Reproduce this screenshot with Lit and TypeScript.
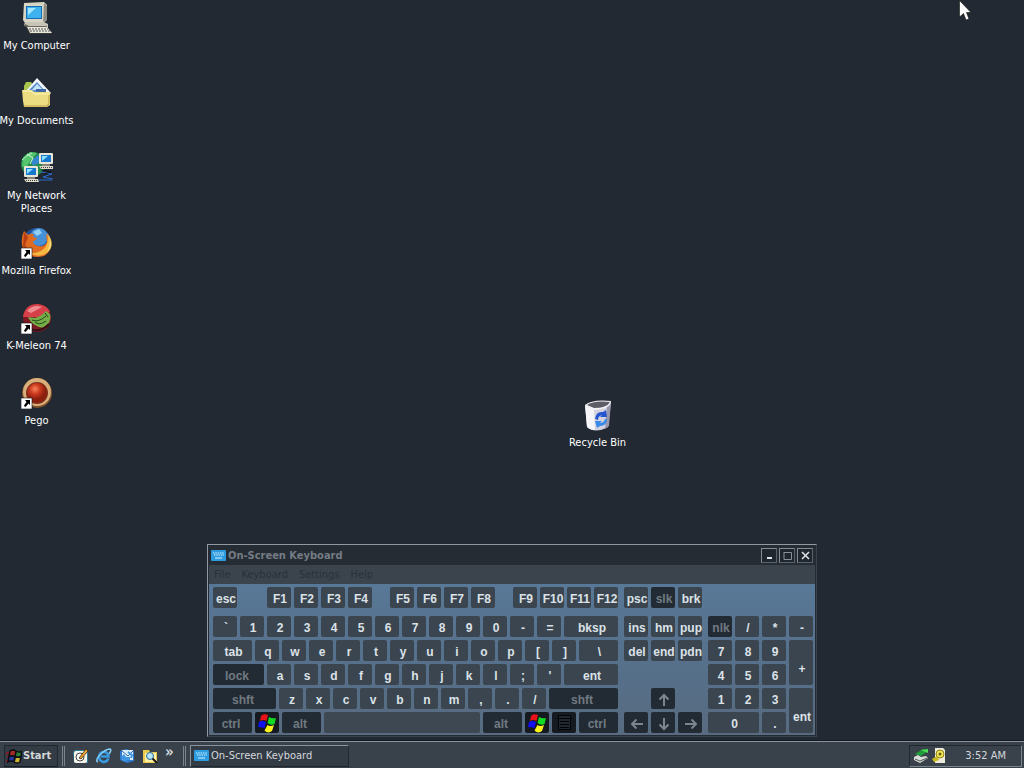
import { LitElement, html, css, svg, nothing } from "lit";
import { customElement } from "lit/decorators.js";

type Cap = [label: string, width: number, kind?: string];

const U = 24;
const row = (labels: string): Cap[] => labels.split(" ").map((l): Cap => [l, U]);
const gap = (width: number): Cap => ["", width, "gap"];

const MAIN: Cap[][] = [
  [["esc", U], gap(24), ...row("F1 F2 F3 F4"), gap(12), ...row("F5 F6 F7 F8"), gap(12), ...row("F9 F10 F11 F12")],
  [...row("\` 1 2 3 4 5 6 7 8 9 0 - ="), ["bksp", 54]],
  [["tab", 39], ...row("q w e r t y u i o p [ ]"), ["\\", 39]],
  [["lock", 51, "mod"], ...row("a s d f g h j k l ; '"), ["ent", 54]],
  [["shft", 63, "mod"], ...row("z x c v b n m , . /"), ["shft", 69, "mod"]],
  [["ctrl", 39, "mod"], ["Windows", U, "win"], ["alt", 39, "mod"], ["Space", 156, "space"], ["alt", 39, "mod"],
    ["Windows", U, "win"], ["Menu", U, "menu"], ["ctrl", 39, "mod"]],
];

const NAV: Cap[][] = [
  [["psc", U], ["slk", U, "lock"], ["brk", U]],
  row("ins hm pup"),
  row("del end pdn"),
  [],
  [gap(24), ["Up", U, "up"]],
  [["Left", U, "left"], ["Down", U, "down"], ["Right", U, "right"]],
];

const PAD: [string, string][] = [
  ["nlk", "lock"], ["/", ""], ["*", ""], ["-", ""],
  ["7", ""], ["8", ""], ["9", ""], ["+", "tall"],
  ["4", ""], ["5", ""], ["6", ""],
  ["1", ""], ["2", ""], ["3", ""], ["ent", "tall"],
  ["0", "wide"], [".", ""],
];

const box = (size: number, body: unknown, view = size) =>
  html`<svg width=${size} height=${size} viewBox="0 0 ${view} ${view}" aria-hidden="true">${body}</svg>`;

const shortcut = svg`<rect x="0" y="21" width="11" height="11" fill="#fff" stroke="#111" stroke-width=".6"/>
  <path d="M4 23h5v5L7.500 26.500 5 29.500 4 30 3 28.500 5.500 25Z" fill="#000"/>`;

const monitor = svg`<path d="M3 1 23 0 26 3V18L22 21H4L2 18Z" fill="#d8d5c4"/><path d="M23 1 26 4V18L22 20Z" fill="#8e8b80"/>
  <path d="M5 4H21V17H5Z" fill="#176db5"/><path d="M6 5H20V16H6Z" fill="#3db2ef"/><path d="M7 6H15L7 13Z" fill="#a4e6ff"/>
  <path d="M4 20H23L27 22V27L8 26 3 23Z" fill="#c9c5b6"/><path d="M4 22 8 24H26V26H8L3 24Z" fill="#69675f"/>
  <path d="M6 25 26 25 31 31 9 31Z" fill="#e8e5da"/><path d="M8 27H27M9 29H29" stroke="#555" stroke-width="1" stroke-dasharray="2 1"/>
  <path d="M6 26 9 32H31" stroke="#4b4942" fill="none"/>`;

const miniPc = svg`<rect x="0" y="0" width="14" height="11" rx="1" fill="#e7e5d8"/><rect x="2" y="2" width="10" height="7" fill="#1778cd"/>
  <path d="M3 3H9L3 8Z" fill="#8ee2ff"/><path d="M3 11H11V13H3Z" fill="#87857c"/><path d="M0 13H14L15 16H2Z" fill="#dddacb"/>
  <path d="M2 14.500H13" stroke="#444" stroke-dasharray="1 1"/>`;

const icons = {
  computer: box(32, monitor),
  documents: box(32, svg`<path d="M3 9 5 5H10L12 8H19V15H3Z" fill="#a9c64e"/><path d="M5 14 16 1 30 16 22 25Z" fill="#f3f6fa"/>
    <path d="M8 13 16 5 26 16 18 19Z" fill="#5b8fcc"/><path d="M11 13 16 7 22 13Z" fill="#c5e3f7"/><path d="M15 12H25V17H15Z" fill="#3d6aa4"/>
    <path d="M1 13H11L13 15H29V28L26 30H3L2 24Z" fill="#ecdc82"/><path d="M2 14H10L13 17H28" stroke="#fff6b8" fill="none"/>
    <path d="M3 29H25L28 27V18" stroke="#b89d3e" fill="none"/>`),
  network: box(32, svg`<circle cx="12" cy="12" r="12" fill="#238c4b"/><path d="M2 6 9 0 16 1 10 8 6 14 1 15Z" fill="#55c46d"/>
    <path d="M10 9 17 3 20 10 12 14Z" fill="#3288cf"/><path d="M1 8Q6 3 11 1" stroke="#bdf1cc" fill="none"/><path d="M6 2 12 6 9 12" stroke="#d5f5e0" fill="none"/>
    <g transform="translate(18 1)">${miniPc}</g><g transform="translate(3 14)">${miniPc}</g>
    <path d="M20 20 31 22 22 25 32 27M18 28H31" stroke="#286bd0" fill="none"/><path d="M20 18 30 20 23 22" stroke="#111" fill="none"/>`),
  firefox: box(32, svg`<circle cx="16" cy="15" r="14" fill="#23509c"/><circle cx="18" cy="10" r="9" fill="#4590d6"/><path d="M12 5 18 2 21 6 16 9Z" fill="#93cff5"/>
    <path d="M3 4 7 8Q9 6 13 7L12 10 16 11Q15 14 12 14 12 18 17 19 24 20 26 15L25 7 29 11Q33 23 23 29 9 33 2 22 -1 12 3 4Z" fill="#df6b20"/>
    <path d="M26 6Q35 17 27 25 19 32 8 26 20 27 25 19 28 13 26 6Z" fill="#f4b840"/><path d="M29 12Q32 20 26 25 29 19 29 12Z" fill="#fbe18a"/><path d="M3 5 7 10 4 18 8 24 2 20Z" fill="#b83e16"/>${shortcut}`),
  kmeleon: box(32, svg`<circle cx="16" cy="16" r="14" fill="#7d1a24"/><path d="M2 15Q4 2 17 2 26 3 29 10L17 15Z" fill="#d64049"/>
    <path d="M6 9Q12 2 21 5L10 11Z" fill="#ee8c90"/><path d="M7 15 14 16Q21 14 25 9L29 12Q31 18 25 25 20 27 14 23 9 20 7 15Z" fill="#75ad48"/>
    <path d="M11 18Q17 21 25 14M14 20Q18 24 25 19M24 11 27 15" stroke="#23461b" fill="none"/>
    <path d="M7 25Q17 33 28 22" stroke="#371015" stroke-width="2" fill="none"/>${shortcut}`),
  pego: box(32, svg`<defs><radialGradient id="pego" cx=".4" cy=".3"><stop stop-color="#f9845b"/><stop offset=".5" stop-color="#cd3a20"/><stop offset="1" stop-color="#8c200e"/></radialGradient></defs>
    <circle cx="16" cy="16" r="15" fill="#805029"/><circle cx="16" cy="15" r="14" fill="#d9b07c"/><circle cx="16" cy="16" r="11" fill="#80301a"/><circle cx="16" cy="16" r="10" fill="url(#pego)"/>${shortcut}`),
  bin: box(32, svg`<path d="M3 6 5 28Q13 35 26 28L29 3Z" fill="#d3d3df"/><path d="M3 6 5 28Q8 31 13 31L12 10Z" fill="#f5f5fa"/><path d="M25 7 29 3 27 27 23 30Z" fill="#9998aa"/>
    <path d="M3 6Q10 0 29 2 29 10 12 11 6 10 3 6Z" fill="#f1f1f5"/><path d="M5 6Q12 1 28 3 25 9 12 9Z" fill="#5d5d66"/>
    <path d="M13 20Q14 12 21 13L24 11 25 18H18L20 16Q16 17 16 21Z" fill="#2456cf"/><path d="M25 20Q25 27 18 27L15 29 13 22 20 22 18 24Q22 24 23 20Z" fill="#3889e8"/>`),
  keyboard: html`<svg width="15" height="11" viewBox="0 0 15 11" aria-hidden="true"><rect width="15" height="11" rx="1" fill="#2d9be0"/>
    <path d="M2 3H13M3 5H13" stroke="#d9f3ff" stroke-dasharray="1.500 .8"/><path d="M4 8H11" stroke="#d9f3ff"/></svg>`,
  flag: box(20, svg`<path d="M4 3Q6 0 11 2L9.500 8Q6 6 3 8Z" fill="#e81218"/><path d="M12 4Q15 6 19 5L17.500 11Q14 13 10.500 10Z" fill="#0fdc20"/>
    <path d="M2 9Q6 7 9 9.500L7.500 15Q4 14 1 14Z" fill="#1010f0"/><path d="M10.500 12Q13 14 17 12L15 18Q11 21 7.500 17.500Z" fill="#fbf41c"/>`),
  start: box(16, svg`<path d="M0 4H3V6H0M1 8H4V10H1M0 12H3V14H0" fill="#8d1720"/><path d="M4 3Q7 1 10 3L9 8Q6 6 3 8Z" fill="#a82a28"/><path d="M11 3Q13 4 16 3L15 8Q12 10 10 8Z" fill="#2b7d34"/>
    <path d="M3 9Q6 8 9 9L8 14Q5 12 2 14Z" fill="#25369c"/><path d="M10 9Q12 11 15 9L14 14Q11 16 9 14Z" fill="#cbb531"/><path d="M4 3Q7 1 10 3 13 5 16 3L14 14Q11 16 8 14 5 12 2 14ZM10 3 8 14M3 8.500Q6 7 9 8.500 12 10 15 8.500" fill="none" stroke="#0a0c0f" stroke-width="1.500"/>`),
  sheet: box(16, svg`<path d="M0 4 2 2H13L15 4V15H1Z" fill="#2d7b9b"/><rect x="1" y="3" width="13" height="12" rx="2" fill="#f5f4e8"/><circle cx="7" cy="9" r="4" fill="#fff" stroke="#444"/>
    <path d="M6 10 13 1 15 3 8 11Z" fill="#e9aa35" stroke="#3c2210" stroke-width=".8"/>`),
  ie: box(16, svg`<path d="M12.500 10.500Q11 14 7.500 14 3 13 3 8.500 4 4 8 4 12 4 12.500 8.500H5" stroke="#389be0" stroke-width="2.500" fill="none"/>
    <path d="M2 14Q-1 13 3 8 9 1 14 1 16 2 13 6" stroke="#80cdf5" fill="none" stroke-width="1.500"/>`),
  mail: box(16, svg`<path d="M1 3 7 1 15 3V13L8 15 1 12Z" fill="#2f79cf"/><path d="M3 2H14V12H3Z" fill="#dcecfb"/><path d="M3 3 9 8 14 3" stroke="#2d69b0" fill="none"/>
    <path d="M5 6 7 9H11V12H7L9 14 4 13 2 9Z" fill="#3f96e4"/><path d="M9 4 13 7 12 10" fill="none" stroke="#3f96e4" stroke-width="2"/>`),
  search: box(16, svg`<path d="M1 2H7L8 4H15V15H1Z" fill="#e9c94d"/><path d="M3 5H14V14H3Z" fill="#fff2a2"/><circle cx="8" cy="8" r="3.500" fill="#b5e6fb" stroke="#27699d"/><path d="M10.500 10.500 15 15" stroke="#161616" stroke-width="2"/>`),
  device: box(16, svg`<path d="M2 6 10 1 15 3 8 8Z" fill="#1f9e38"/><path d="M8 2 15 1V5Z" fill="#4ddd58"/><path d="M1 9 5 7 8 9 13 8 15 10 7 15 1 12Z" fill="#d9ddd9"/><path d="M2 11 7 13 14 10" stroke="#555" fill="none"/>`),
  volume: box(16, svg`<path d="M4 0H12L14 2V15H4Z" fill="#eeeadc"/><circle cx="9" cy="6" r="4" fill="#f3e65a" stroke="#8b8217"/><circle cx="9" cy="6" r="1.500" fill="#676012"/><path d="M1 11 6 8 8 12 3 14Z" fill="#c9b91f"/>`),
};

const ARROWS: Record<string, string> = {
  up: "M7 13V2M2.500 6.500 7 2 11.500 6.500",
  down: "M7 1V12M2.500 7.500 7 12 11.500 7.500",
  left: "M13 7H2M6.500 2.500 2 7 6.500 11.500",
  right: "M1 7H12M7.500 2.500 12 7 7.500 11.500",
};

@customElement("on-screen-keyboard")
class OnScreenKeyboard extends LitElement {
  static styles = css`
    :host { display: block; border: 1px solid; border-color: #9299a1 #39434e #39434e #9299a1; background: #242b34; padding: 1px; color: #b5bac0; }
    .title { display: flex; align-items: center; height: 19px; padding: 0 2px; background: #252c34; gap: 2px; }
    .name { flex: 1; font-weight: bold; color: #747c84; margin: 0; font-size: 11px; }
    .buttons { display: flex; gap: 2px; }
    .box { width: 16px; height: 15px; padding: 0; border: 1px solid #858b91; border-right-color: #59616a; border-bottom-color: #59616a; background: #20262d; display: grid; place-items: center; }
    .menus { display: flex; height: 19px; align-items: center; background: #3b444d; padding-left: 5px; gap: 11px; }
    .menu { border: 0; padding: 0; background: none; font: inherit; color: #29313a; }
    .area { display: flex; gap: 6px; background: linear-gradient(#587897, #566f89 60%, #586b80); padding: 3px 2px 2px 4px; }
    .block { display: flex; flex-direction: column; gap: 3px; }
    .row { display: flex; gap: 3px; height: 21px; }
    .row:first-child { margin-bottom: 5px; }
    .key { height: 21px; box-sizing: border-box; padding: 3px 0 0 2px; border: 0; border-radius: 2px; background: #3a454f; color: #dce2e8; font: bold 12px/18px "Liberation Sans", Arial, sans-serif; white-space: nowrap; display: flex; justify-content: center; align-items: center; }
    .mod, .lock, .up, .down, .left, .right { background: #222b34; color: #717a82; }
    .mod { padding-right: 5px; }
    .win, .menu-key { background: #151a20; padding: 0; }
    .space { background: #3d4852; }
    .pad { display: grid; grid-template-columns: repeat(4, 24px); grid-auto-rows: 21px; gap: 3px; padding-top: 29px; }
    .tall { grid-row: span 2; height: auto; padding-top: 13px; }
    .wide { grid-column: span 2; }
  `;

  private cap([label, width, kind = ""]: Cap) {
    if (kind === "gap") return html`<span style="width:${width}px"></span>`;
    const cls = kind === "menu" ? "menu-key" : kind;
    let face: unknown = label;
    if (kind === "win") face = icons.flag;
    else if (kind === "space") face = nothing;
    else if (kind === "menu")
      face = box(17, svg`<path d="M2 1H15V16H2Z" fill="#20272f"/><path d="M2.500 1.500H14.500V15.500H2.500ZM1 4.500H16M4 7.500H13M4 10.500H13M4 13.500H13" fill="none" stroke="#020304"/>`);
    else if (ARROWS[kind]) face = box(14, svg`<path d=${ARROWS[kind]} fill="none" stroke="#7c858c" stroke-width="2"/>`);
    return html`<button class="key ${cls}" aria-label=${label} style="width:${width}px">${face}</button>`;
  }

  private block(lines: Cap[][]) {
    return html`<div class="block">${lines.map((l) => html`<div class="row">${l.map((c) => this.cap(c))}</div>`)}</div>`;
  }

  render() {
    return html`
      <header class="title">
        ${icons.keyboard}
        <h1 class="name">On-Screen Keyboard</h1>
        <div class="buttons">
          <button class="box" aria-label="Minimize">${box(11, svg`<path d="M3 8H8" stroke="#e2e5e8" stroke-width="2"/>`)}</button>
          <button class="box" aria-label="Maximize">${box(11, svg`<path d="M2 2.500H9.500V9.500H2V2" fill="none" stroke="#8b9299"/>`)}</button>
          <button class="box" aria-label="Close">${box(11, svg`<path d="M2 2 9 9M9 2 2 9" stroke="#e2e5e8" stroke-width="1.500"/>`)}</button>
        </div>
      </header>
      <nav class="menus">
        ${["File", "Keyboard", "Settings", "Help"].map((m) => html`<button class="menu">${m}</button>`)}
      </nav>
      <div class="area">
        ${this.block(MAIN)} ${this.block(NAV)}
        <div class="pad">${PAD.map(([l, k]) => html`<button class="key ${k}">${l}</button>`)}</div>
      </div>
    `;
  }
}

@customElement("app-root")
class AppRoot extends LitElement {
  static styles = css`
    :host { display: flex; flex-direction: column; height: 100vh; overflow: hidden; background: #222932; color: #fff; font: 11px/13px Tahoma, "DejaVu Sans Condensed", "Noto Sans", sans-serif; cursor: default; }
    .desktop { flex: 1; position: relative; }
    .shortcuts { display: flex; flex-direction: column; width: 73px; padding-top: 2px; }
    .item { display: flex; flex-direction: column; align-items: center; gap: 5px; height: 75px; color: #fff; text-decoration: none; text-align: center; }
    .label { white-space: pre; }
    .bin { position: absolute; left: 561px; top: 399px; width: 73px; }
    .osk { position: absolute; left: 207px; top: 544px; }
    .pointer { position: absolute; left: 959px; top: 0; }
    .taskbar { display: flex; align-items: center; height: 25px; border-top: 1px solid #8b939b; box-shadow: 0 -1px #12181f; background: #39424b; padding: 1px 2px 0 4px; color: #d3d7db; }
    .task, .start { display: flex; align-items: center; height: 22px; box-sizing: border-box; background: #333c45; color: inherit; font: inherit; border: 1px solid; }
    .start { width: 54px; padding: 0 1px; gap: 1px; font-weight: bold; border-color: #20272e #20272e #171d23 #20272e; }
    .task { width: 159px; gap: 2px; padding: 0 3px; border-color: #89919a #20272e #20272e #89919a; }
    .grip { width: 1px; height: 20px; border-left: 1px solid #7b838b; border-right: 1px solid #7b838b; margin: 0 4px; }
    .quick { display: flex; gap: 7px; padding-left: 4px; }
    .tool { border: 0; padding: 0; background: none; height: 16px; color: inherit; }
    .more { display: flex; font: bold 15px/8px "DejaVu Sans Condensed", sans-serif; width: 14px; }
    .tray { display: flex; align-items: center; gap: 2px; margin-left: auto; height: 22px; width: 113px; box-sizing: border-box; padding: 0 15px 0 3px; border: 1px solid; border-color: #20272e #7b838b #7b838b #20272e; }
    .clock { margin-left: auto; }
  `;

  private shortcut(icon: unknown, name: string, extra = "") {
    return html`<a class="item ${extra}" href="#">${icon}<span class="label">${name}</span></a>`;
  }

  render() {
    return html`
      <main class="desktop">
        <nav class="shortcuts">
          ${this.shortcut(icons.computer, "My Computer")}
          ${this.shortcut(icons.documents, "My Documents")}
          ${this.shortcut(icons.network, "My Network\nPlaces")}
          ${this.shortcut(icons.firefox, "Mozilla Firefox")}
          ${this.shortcut(icons.kmeleon, "K-Meleon 74")}
          ${this.shortcut(icons.pego, "Pego")}
        </nav>
        ${this.shortcut(icons.bin, "Recycle Bin", "bin")}
        <on-screen-keyboard class="osk"></on-screen-keyboard>
        <svg class="pointer" width="12" height="21" viewBox="0 0 12 21" aria-hidden="true">
          <path d="M.5 .5V17L4.500 13.500 7 20 10 19 7.500 12.500H12Z" fill="#fff" stroke="#111" stroke-width=".6" />
        </svg>
      </main>
      <footer class="taskbar">
        <button class="start">${icons.start}Start</button>
        <span class="grip"></span>
        <div class="quick">
          <button class="tool" aria-label="Show Desktop">${icons.sheet}</button>
          <button class="tool" aria-label="Internet Explorer">${icons.ie}</button>
          <button class="tool" aria-label="Mail">${icons.mail}</button>
          <button class="tool" aria-label="Search">${icons.search}</button>
          <button class="tool more" aria-label="More">»</button>
        </div>
        <span class="grip"></span>
        <button class="task">${icons.keyboard}On-Screen Keyboard</button>
        <div class="tray">${icons.device}${icons.volume}<time class="clock">3:52 AM</time></div>
      </footer>
    `;
  }
}
